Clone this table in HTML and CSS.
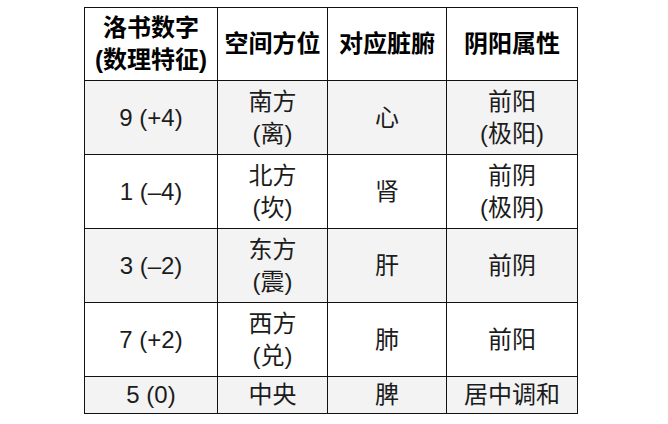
FILE: index.html
```html
<!DOCTYPE html>
<html lang="zh">
<head>
<meta charset="utf-8">
<link rel="stylesheet" href="styles.css">
</head>
<body>
<div class="page">
<table class="grid">
  <colgroup>
    <col class="c1"><col class="c2"><col class="c3"><col class="c4">
  </colgroup>
  <thead>
    <tr class="head">
      <th>洛书数字<br>(数理特征)</th>
      <th>空间方位</th>
      <th>对应脏腑</th>
      <th>阴阳属性</th>
    </tr>
  </thead>
  <tbody>
    <tr class="row tall shade">
      <td>9 (+4)</td>
      <td>南方<br>(离)</td>
      <td>心</td>
      <td>前阳<br>(极阳)</td>
    </tr>
    <tr class="row tall">
      <td>1 (–4)</td>
      <td>北方<br>(坎)</td>
      <td>肾</td>
      <td>前阴<br>(极阴)</td>
    </tr>
    <tr class="row tall shade">
      <td>3 (–2)</td>
      <td>东方<br>(震)</td>
      <td>肝</td>
      <td>前阴</td>
    </tr>
    <tr class="row tall">
      <td>7 (+2)</td>
      <td>西方<br>(兑)</td>
      <td>肺</td>
      <td>前阳</td>
    </tr>
    <tr class="row short shade">
      <td>5 (0)</td>
      <td>中央</td>
      <td>脾</td>
      <td>居中调和</td>
    </tr>
  </tbody>
</table>
</div>
</body>
</html>
```
FILE: styles.css
```css
html, body {
  margin: 0;
  padding: 0;
  background: #ffffff;
}
.page {
  padding: 7px 0 0 84px;
}
.grid {
  border-collapse: collapse;
  table-layout: fixed;
  width: 493px;
  font-family: "Liberation Sans", "Noto Sans CJK SC", sans-serif;
  font-size: 24px;
  line-height: 32px;
  color: #1c1c1c;
}
.c1 { width: 133px; }
.c2 { width: 110px; }
.c3 { width: 119px; }
.c4 { width: 131px; }
.grid th, .grid td {
  border: 1px solid #111111;
  text-align: center;
  vertical-align: middle;
  padding: 0;
}
.grid th {
  font-weight: bold;
  color: #000000;
}
.head { height: 73px; }
.tall { height: 74px; }
.short { height: 37px; }
.shade td { background: #f3f3f3; }
```
